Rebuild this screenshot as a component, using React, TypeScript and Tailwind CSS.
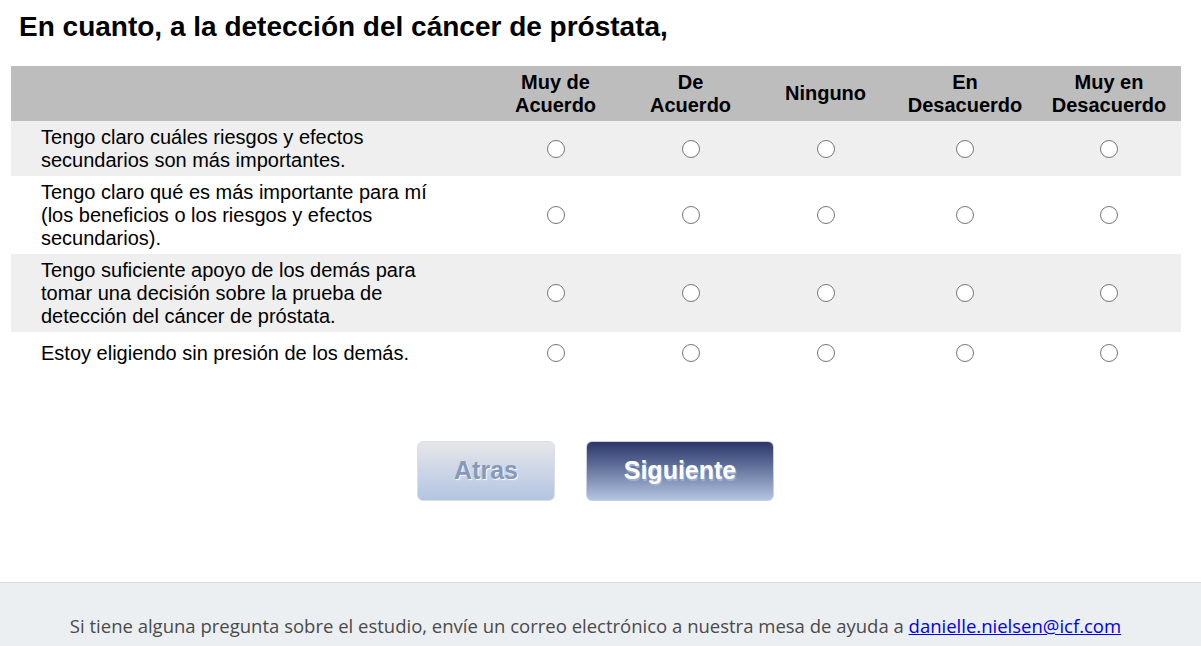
const cols = ["Muy de|Acuerdo", "De|Acuerdo", "Ninguno", "En|Desacuerdo", "Muy en|Desacuerdo"];
const widths = ["w-[135px]", "w-[135px]", "w-[135px]", "w-[144px]", "w-[144px]"];

const rows = [
  { text: ["Tengo claro cuáles riesgos y efectos", "secundarios son más importantes."], h: "h-[55px]", bg: "bg-[#efefef]" },
  { text: ["Tengo claro qué es más importante para mí", "(los beneficios o los riesgos y efectos", "secundarios)."], h: "h-[78px]", bg: "bg-white" },
  { text: ["Tengo suficiente apoyo de los demás para", "tomar una decisión sobre la prueba de", "detección del cáncer de próstata."], h: "h-[78px]", bg: "bg-[#efefef]" },
  { text: ["Estoy eligiendo sin presión de los demás."], h: "h-[42px]", bg: "bg-white" },
];

function Radio() {
  return <span className="block h-[18px] w-[18px] rounded-full border border-[#767676] bg-white" />;
}

export default function App() {
  return (
    <div className="flex min-h-[646px] flex-col bg-white font-['Liberation_Sans',Arial,sans-serif] text-black">
      <h1 className="pl-[19px] pt-[11px] text-[28px] font-bold leading-[32px]">
        En cuanto, a la detección del cáncer de próstata,
      </h1>

      <div className="ml-[11px] mt-[23px] w-[1170px]">
        <div className="flex h-[55px] items-center bg-[#bdbdbd]">
          <div className="w-[477px]" />
          {cols.map((c, i) => (
            <div key={c} className={`${widths[i]} text-center text-[20px] font-bold leading-[23px]`}>
              {c.split("|").map((l) => (
                <div key={l}>{l}</div>
              ))}
            </div>
          ))}
        </div>
        {rows.map((r, ri) => (
          <div key={ri} className={`flex items-center ${r.h} ${r.bg}`}>
            <div className="w-[477px] pl-[30px] text-[20px] leading-[23px]">
              {r.text.map((t) => (
                <div key={t}>{t}</div>
              ))}
            </div>
            {cols.map((c, i) => (
              <div key={c} className={`${widths[i]} flex justify-center`}>
                <Radio />
              </div>
            ))}
          </div>
        ))}
      </div>

      <div className="mt-[67px] flex justify-center gap-[31px] pr-[10px]">
        <button className="h-[60px] w-[138px] rounded-[6px] border border-[#dcdfe6] bg-gradient-to-b from-[#e6e6e8] to-[#b3c5e2] text-[25px] font-bold text-[#8799ba] [text-shadow:1px_1px_1px_#ffffff]">
          Atras
        </button>
        <button className="h-[60px] w-[188px] rounded-[6px] border border-[#c7d0e0] bg-gradient-to-b from-[#2c3868] to-[#b4c5e2] text-[25px] font-bold text-white [text-shadow:1px_2px_1px_#9fb1d8]">
          Siguiente
        </button>
      </div>

      <div className="mt-[81px] flex-1 border-t border-[#d9dcdf] bg-[#eceff2] pr-[10px] pt-[31px] text-center font-['Open_Sans',sans-serif] text-[18.5px] leading-[24px] text-[#4a4a4a]">
        Si tiene alguna pregunta sobre el estudio, envíe un correo electrónico a nuestra mesa de ayuda a{" "}
        <a href="#" className="text-[#0000ee] underline">
          danielle.nielsen@icf.com
        </a>
      </div>
    </div>
  );
}
